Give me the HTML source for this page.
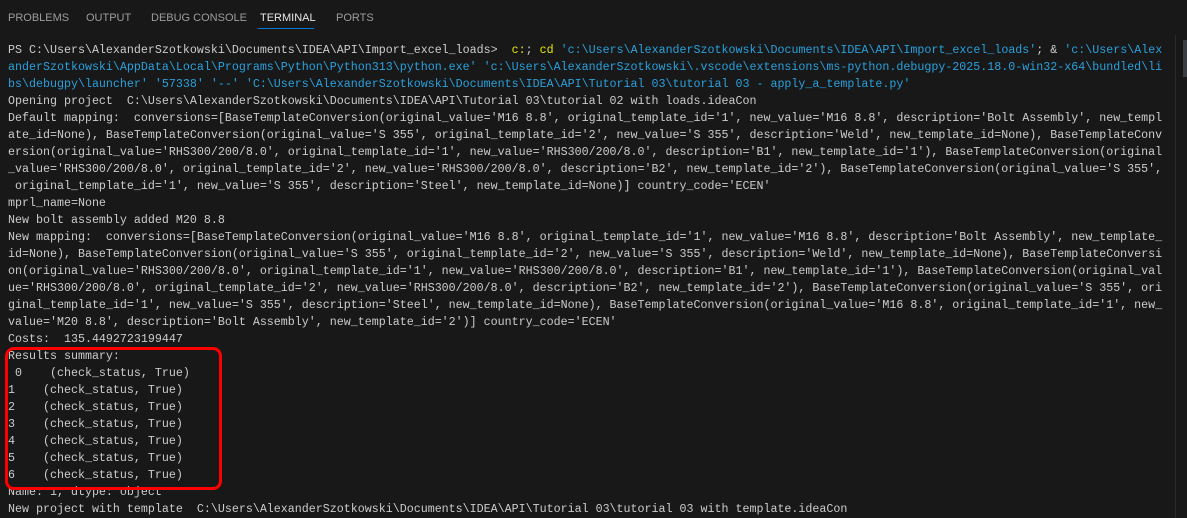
<!DOCTYPE html>
<html><head><meta charset="utf-8"><style>
html,body{margin:0;padding:0;background:#181818;width:1187px;height:518px;overflow:hidden}
.tabs{position:absolute;top:0;left:0;right:0;height:35px;font-family:"Liberation Sans",sans-serif;font-size:11px;color:#9d9d9d}
.tabs span{position:absolute;top:12px}
.act{color:#e7e7e7}
.ul{position:absolute;left:258px;top:28px;width:56px;height:1px;background:#0078d4}
pre{position:absolute;left:8px;top:41.5px;margin:0;font-family:"Liberation Mono",monospace;font-size:11.67px;line-height:17px;color:#cccccc}
.b{color:#2aa0dc}.y{color:#e5e510}
.sb{position:absolute;left:1175px;top:35px;width:1px;height:483px;background:#2b2b2b}
.thumb{position:absolute;left:1183px;top:40px;width:4px;height:37px;background:#3a3d41}
.box{position:absolute;left:5px;top:347px;width:211px;height:137px;border:3px solid #ff0000;border-radius:9px}
</style></head><body>
<div class="tabs"><span style="left:8px">PROBLEMS</span><span style="left:86px">OUTPUT</span><span style="left:151px">DEBUG CONSOLE</span><span class="act" style="left:260px">TERMINAL</span><span style="left:336px">PORTS</span></div>
<div class="ul"></div>
<div class="sb"></div><div class="thumb"></div>
<pre>PS C:\Users\AlexanderSzotkowski\Documents\IDEA\API\Import_excel_loads>  <span class="y">c:</span>; <span class="y">cd</span> <span class="b">'c:\Users\AlexanderSzotkowski\Documents\IDEA\API\Import_excel_loads'</span>; &amp; <span class="b">'c:\Users\Alex
anderSzotkowski\AppData\Local\Programs\Python\Python313\python.exe' 'c:\Users\AlexanderSzotkowski\.vscode\extensions\ms-python.debugpy-2025.18.0-win32-x64\bundled\li
bs\debugpy\launcher' '57338' '--' 'C:\Users\AlexanderSzotkowski\Documents\IDEA\API\Tutorial 03\tutorial 03 - apply_a_template.py'</span>
Opening project  C:\Users\AlexanderSzotkowski\Documents\IDEA\API\Tutorial 03\tutorial 02 with loads.ideaCon
Default mapping:  conversions=[BaseTemplateConversion(original_value='M16 8.8', original_template_id='1', new_value='M16 8.8', description='Bolt Assembly', new_templ
ate_id=None), BaseTemplateConversion(original_value='S 355', original_template_id='2', new_value='S 355', description='Weld', new_template_id=None), BaseTemplateConv
ersion(original_value='RHS300/200/8.0', original_template_id='1', new_value='RHS300/200/8.0', description='B1', new_template_id='1'), BaseTemplateConversion(original
_value='RHS300/200/8.0', original_template_id='2', new_value='RHS300/200/8.0', description='B2', new_template_id='2'), BaseTemplateConversion(original_value='S 355',
 original_template_id='1', new_value='S 355', description='Steel', new_template_id=None)] country_code='ECEN'
mprl_name=None
New bolt assembly added M20 8.8
New mapping:  conversions=[BaseTemplateConversion(original_value='M16 8.8', original_template_id='1', new_value='M16 8.8', description='Bolt Assembly', new_template_
id=None), BaseTemplateConversion(original_value='S 355', original_template_id='2', new_value='S 355', description='Weld', new_template_id=None), BaseTemplateConversi
on(original_value='RHS300/200/8.0', original_template_id='1', new_value='RHS300/200/8.0', description='B1', new_template_id='1'), BaseTemplateConversion(original_val
ue='RHS300/200/8.0', original_template_id='2', new_value='RHS300/200/8.0', description='B2', new_template_id='2'), BaseTemplateConversion(original_value='S 355', ori
ginal_template_id='1', new_value='S 355', description='Steel', new_template_id=None), BaseTemplateConversion(original_value='M16 8.8', original_template_id='1', new_
value='M20 8.8', description='Bolt Assembly', new_template_id='2')] country_code='ECEN'
Costs:  135.4492723199447
Results summary:
 0    (check_status, True)
1    (check_status, True)
2    (check_status, True)
3    (check_status, True)
4    (check_status, True)
5    (check_status, True)
6    (check_status, True)
Name: 1, dtype: object
New project with template  C:\Users\AlexanderSzotkowski\Documents\IDEA\API\Tutorial 03\tutorial 03 with template.ideaCon</pre>
<div class="box"></div>
</body></html>
